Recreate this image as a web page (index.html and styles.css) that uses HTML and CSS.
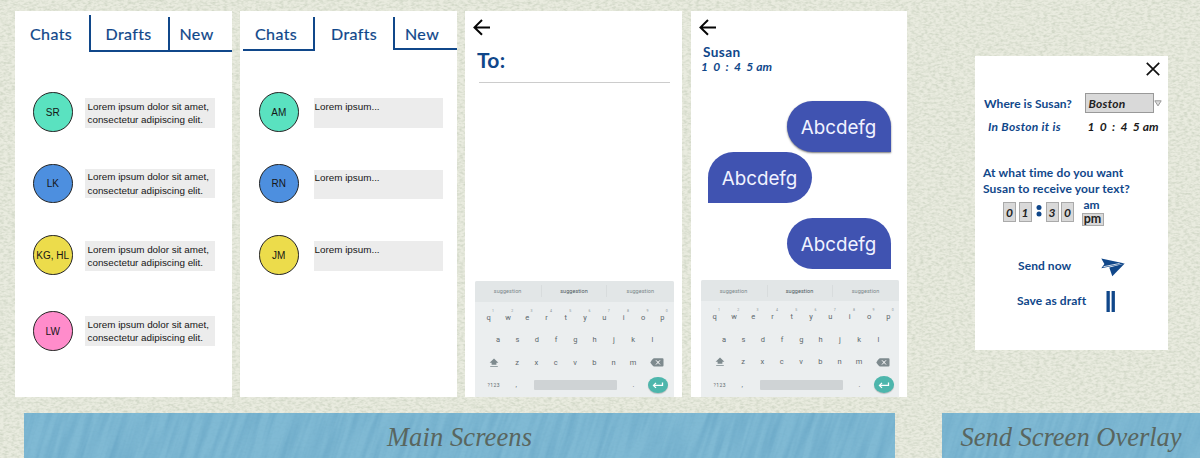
FILE: index.html
```html
<!DOCTYPE html>
<html lang="en">
<head>
<meta charset="utf-8">
<title>Messaging screens</title>
<link rel="stylesheet" href="styles.css">
</head>
<body>
<svg class="paper" width="1200" height="458" aria-hidden="true">
  <defs>
    <filter id="weave" x="0" y="0" width="100%" height="100%" color-interpolation-filters="sRGB">
      <feTurbulence type="fractalNoise" baseFrequency="0.25 0.45" numOctaves="2" seed="8"/>
      <feColorMatrix values="0 0 0 0 .68  0 0 0 0 .73  0 0 0 0 .64  .9 0 0 0 -.34"/>
    </filter>
    <filter id="streak" x="0" y="0" width="100%" height="100%" color-interpolation-filters="sRGB">
      <feTurbulence type="fractalNoise" baseFrequency="0.15 0.012" numOctaves="3" seed="3"/>
      <feColorMatrix values="0 0 0 0 .25  0 0 0 0 .52  0 0 0 0 .68  .5 0 0 0 -.17"/>
    </filter>
    <clipPath id="bands"><path d="M24 413h871v45H24zM942 413h258v45H942z"/></clipPath>
  </defs>
  <rect width="1200" height="458" filter="url(#weave)"/>
  <g clip-path="url(#bands)">
    <rect width="1200" height="458" fill="#70b2d2" opacity=".87"/>
    <g transform="rotate(18 600 435)"><rect x="-50" y="150" width="1300" height="560" filter="url(#streak)"/></g>
  </g>
</svg>

<svg width="0" height="0" class="defs" aria-hidden="true">
  <symbol id="back" viewBox="0 0 18 17"><path d="M17 8.4H1.5M9 1 1.5 8.4 9 15.8" fill="none" stroke="#050505" stroke-width="2"/></symbol>
  <symbol id="shift" viewBox="0 0 10 10"><path d="M5 .4 9.4 4.7H7.4V6.8H2.6V4.7H.6zM1.2 8.2h7.6v.9H1.2z" fill="#7e8a8e"/></symbol>
  <symbol id="erase" viewBox="0 0 14 9"><path d="M4 .3h8.5q1 0 1 1v6.2q0 1-1 1H4Q3 8.500 .3 4.400 3 .3 4 .3z" fill="#7e8a8e"/><path d="m6 2.300 4 4.200m0-4.200L6 6.500" stroke="#fff" stroke-width="1"/></symbol>
  <symbol id="enter" viewBox="0 0 12 8"><path d="M10.500 1.500v2.900H1.500M4 1.900 1.500 4.400 4 6.900" fill="none" stroke="#fff" stroke-width="1.300"/></symbol>
</svg>

<main class="board">
  <section class="screen">
    <nav class="tabs tabs-chats"><span class="t1">Chats</span><span class="t2">Drafts</span><span class="t3">New</span></nav>
    <ul class="list list-chats">
      <li><b class="mint">SR</b><p>Lorem ipsum dolor sit amet,<br>consectetur adipiscing elit.</p></li>
      <li><b class="blue">LK</b><p class="up">Lorem ipsum dolor sit amet,<br>consectetur adipiscing elit.</p></li>
      <li><b class="yellow">KG, HL</b><p>Lorem ipsum dolor sit amet,<br>consectetur adipiscing elit.</p></li>
      <li class="last"><b class="pink">LW</b><p class="up">Lorem ipsum dolor sit amet,<br>consectetur adipiscing elit.</p></li>
    </ul>
  </section>

  <section class="screen">
    <nav class="tabs tabs-drafts"><span class="t1">Chats</span><span class="t2">Drafts</span><span class="t3">New</span></nav>
    <ul class="list list-drafts">
      <li><b class="mint">AM</b><p>Lorem ipsum...</p></li>
      <li><b class="blue">RN</b><p>Lorem ipsum...</p></li>
      <li><b class="yellow">JM</b><p>Lorem ipsum...</p></li>
    </ul>
  </section>

  <section class="screen compose">
    <svg class="back"><use href="#back"/></svg>
    <div class="to"><span>To:</span></div>
    <div class="keyboard">
      <div class="suggest"><span>suggestion</span><span class="mid">suggestion</span><span>suggestion</span></div>
      <div class="keys row1"><i>q<sup>1</sup></i><i>w<sup>2</sup></i><i>e<sup>3</sup></i><i>r<sup>4</sup></i><i>t<sup>5</sup></i><i>y<sup>6</sup></i><i>u<sup>7</sup></i><i>i<sup>8</sup></i><i>o<sup>9</sup></i><i>p<sup>0</sup></i></div>
      <div class="keys row2"><i>a</i><i>s</i><i>d</i><i>f</i><i>g</i><i>h</i><i>j</i><i>k</i><i>l</i></div>
      <div class="keys row3"><svg class="shift"><use href="#shift"/></svg><i>z</i><i>x</i><i>c</i><i>v</i><i>b</i><i>n</i><i>m</i><svg class="erase"><use href="#erase"/></svg></div>
      <div class="row4"><span class="sym">?123</span><span class="comma">,</span><span class="space"></span><span class="dot">.</span><span class="enter"><svg><use href="#enter"/></svg></span></div>
    </div>
  </section>

  <section class="screen thread">
    <svg class="back"><use href="#back"/></svg>
    <h2>Susan</h2>
    <div class="clock"><span class="digits">10:4</span><span>5</span><span class="ampm">am</span></div>
    <div class="bubbles">
      <div class="bubble out raised">Abcdefg</div>
      <div class="bubble in">Abcdefg</div>
      <div class="bubble out low">Abcdefg</div>
    </div>
    <div class="keyboard">
      <div class="suggest"><span>suggestion</span><span class="mid">suggestion</span><span>suggestion</span></div>
      <div class="keys row1"><i>q<sup>1</sup></i><i>w<sup>2</sup></i><i>e<sup>3</sup></i><i>r<sup>4</sup></i><i>t<sup>5</sup></i><i>y<sup>6</sup></i><i>u<sup>7</sup></i><i>i<sup>8</sup></i><i>o<sup>9</sup></i><i>p<sup>0</sup></i></div>
      <div class="keys row2"><i>a</i><i>s</i><i>d</i><i>f</i><i>g</i><i>h</i><i>j</i><i>k</i><i>l</i></div>
      <div class="keys row3"><svg class="shift"><use href="#shift"/></svg><i>z</i><i>x</i><i>c</i><i>v</i><i>b</i><i>n</i><i>m</i><svg class="erase"><use href="#erase"/></svg></div>
      <div class="row4"><span class="sym">?123</span><span class="comma">,</span><span class="space"></span><span class="dot">.</span><span class="enter"><svg><use href="#enter"/></svg></span></div>
    </div>
  </section>

  <section class="overlay">
    <svg class="close" viewBox="0 0 14 14"><path d="m.8.800 12.400 12.400m0-12.400L.8 13.200" stroke="#111" stroke-width="1.700"/></svg>
    <div class="where"><span class="q">Where is Susan?</span><span class="select">Boston</span><svg class="caret" viewBox="0 0 8 7"><path d="M.8.800h6.400L4 5.900z" fill="#ddd" stroke="#999" stroke-width="1"/></svg></div>
    <div class="local"><span class="in-city">In Boston it is</span><span class="clock"><span class="digits">10:4</span><span>5</span><span class="ampm">am</span></span></div>
    <p class="ask">At what time do you want<br>Susan to receive your text?</p>
    <div class="time"><span class="d">0</span><span class="d">1</span><svg class="colon" viewBox="0 0 6 12"><circle cx="3" cy="2.600" r="2.500"/><circle cx="3" cy="9" r="2.500"/></svg><span class="d">3</span><span class="d">0</span>
      <div class="half"><span class="am">am</span><span class="pm">pm</span></div></div>
    <div class="action send"><span>Send now</span><svg viewBox="0 0 24 19"><path d="M.3.500 23.700 5.400.3 10.300 3.400 6.100z"/><path d="M23.700 5.400 11.300 18.200 8.300 9.600z"/><path d="m2.500 8.700 16-3.200" stroke="#fff" stroke-width=".8"/></svg></div>
    <div class="action save"><span>Save as draft</span><svg viewBox="0 0 10 21"><path d="M.5 0h3.300v21H.5zM5.600 0h3.300v21H5.600z"/></svg></div>
  </section>
</main>
<footer class="captions"><div class="main-cap">Main Screens</div><div class="over-cap">Send Screen Overlay</div></footer>
</body>
</html>
```
FILE: styles.css
```css
* { box-sizing: border-box; }
body { margin: 0; width: 1200px; height: 458px; overflow: hidden; background: #e9ebdf; font-family: Lato, "Liberation Sans", sans-serif; font-variant-ligatures: none; color: #10478a; }
p, h2, ul { margin: 0; padding: 0; }
svg { display: block; flex: none; }
.paper { position: absolute; inset: 0; z-index: -1; }
.defs { position: absolute; }
.board { display: flex; align-items: flex-start; gap: 8px; height: 413px; padding: 11px 0 0 15px; }
.screen { width: 217px; height: 385.500px; flex: none; background: #fff; overflow: hidden; }

.tabs { display: flex; align-items: flex-end; height: 41px; font-size: 16px; line-height: 20px; letter-spacing: .4px; white-space: nowrap; -webkit-text-stroke: .2px; }
.tabs-chats .t1 { width: 73.500px; height: 37px; padding: 9px 0 0 15px; }
.tabs-chats .t2 { width: 79px; height: 37px; padding: 9px 0 0 15px; border-left: 2.500px solid; border-bottom: 2px solid; }
.tabs-chats .t3 { width: 64.500px; height: 35px; padding: 7px 0 0 10px; border-left: 2px solid; border-bottom: 2px solid; }
.tabs-drafts { height: 40px; }
.tabs-drafts .t1 { width: 72px; height: 34px; margin-left: 3px; padding: 7px 0 0 12px; border-right: 2px solid; border-bottom: 2px solid; }
.tabs-drafts .t2 { width: 78px; height: 34px; padding: 7px 0 0 16px; }
.tabs-drafts .t3 { width: 64px; height: 33px; margin-bottom: 1px; padding: 7px 0 0 10px; border-left: 2px solid; border-bottom: 2px solid; }

.list { display: flex; flex-direction: column; gap: 31.500px; list-style: none; color: #161616; font-family: "Liberation Sans", Arial, sans-serif; }
.list-chats { padding: 40px 0 0 18px; }
.list-drafts { padding: 41px 0 0 19px; }
.list li { display: flex; align-items: flex-start; height: 40px; }
.list .last { margin-top: 4.500px; }
.list b { display: flex; align-items: center; justify-content: center; width: 39.500px; height: 39.500px; margin-right: 12.500px; padding-top: 1px; border: 1.300px solid #222; border-radius: 50%; font-size: 10px; font-weight: 400; white-space: nowrap; }
.list p { width: 129.500px; height: 29.500px; margin-top: 6px; padding: 1.500px 0 0 2.500px; background: #ececec; font-size: 9.850px; line-height: 13.500px; white-space: nowrap; }
.list .up { margin-top: 5px; }
.list-drafts b { margin-right: 15px; }
.list-drafts p { padding-left: 1px; }
.mint { background: #5ae2c0; }
.blue { background: #4d8fdf; }
.yellow { background: #ecdc4b; }
.pink { background: #ff8ccb; }

.compose, .thread { display: flex; flex-direction: column; }
.thread { width: 216px; margin-left: 1px; }
.back { width: 18px; height: 17px; margin: 8px 0 0 8px; }
.to { height: 36px; width: 191px; margin: 11px 0 0 14px; border-bottom: 1.500px solid #ccc; font-size: 21px; line-height: 26px; font-weight: 700; letter-spacing: .3px; }
.to span { margin-left: -2px; }
.keyboard { width: 199px; height: 120px; margin: auto 0 -4px 9.500px; flex: none; background: #ebeeef; border-radius: 2px 2px 0 0; color: #5c686d; font-family: Roboto, sans-serif; }
.thread .keyboard { width: 198px; height: 120.500px; margin-left: 9.500px; }
.suggest { display: grid; grid-template-columns: repeat(3, 1fr); align-items: center; height: 21px; background: #e2e6e7; border-radius: 2px 2px 0 0; font-size: 5.500px; letter-spacing: .05px; text-align: center; }
.suggest span { line-height: 12px; color: #7b868a; }
.suggest .mid { border: solid #d8dcdd; border-width: 0 1px; color: #4d595e; }
.keys { display: flex; align-items: center; font-size: 7.500px; }
.keys i { position: relative; width: 19.300px; font-style: normal; text-align: center; line-height: 12px; }
.keys sup { position: absolute; left: 13px; top: -5px; font-size: 3.500px; line-height: 8px; color: #8a9498; }
.row1 { height: 32px; padding-left: 4.500px; }
.row2 { height: 13px; padding-left: 14px; }
.row3 { height: 32px; padding-left: 14.500px; }
.shift { width: 10px; height: 10px; margin-right: 8.500px; }
.erase { width: 14px; height: 9px; margin-left: 7.500px; }
.row4 { display: flex; align-items: center; height: 13px; font-size: 5px; }
.sym { width: 32px; padding-left: 13px; letter-spacing: .4px; }
.comma { width: 27.500px; padding-left: 9px; font-size: 7px; }
.space { width: 82.500px; height: 10px; background: #cfd3d5; border-radius: 1px; }
.dot { width: 31px; text-align: center; font-size: 7px; padding-left: 3px; }
.enter { display: grid; place-items: center; width: 20px; height: 16.500px; border-radius: 50%; background: #4db6ac; box-shadow: 0 1px 1px #0003; }
.enter svg { width: 12px; height: 8px; }

.thread h2 { margin: 7px 0 0 12px; font-size: 13.600px; line-height: 18px; letter-spacing: .4px; }
.clock { display: flex; font-style: italic; font-weight: 700; font-size: 12px; line-height: 13px; white-space: nowrap; }
.thread .clock { margin: -1px 0 1px 10px; }
.digits { letter-spacing: 5.300px; }
.ampm { margin-left: 3px; }
.bubbles { display: flex; flex-direction: column; padding: 27px 16.500px 0; }
.bubble { display: flex; align-items: center; justify-content: center; width: 104px; height: 51px; background: #4053b1; color: #f0f2ff; font-family: Inter, sans-serif; font-weight: 400; font-size: 18.800px; padding-top: 2px; }
.out { align-self: flex-end; border-radius: 26px 26px 0 26px; }
.in { border-radius: 26px 26px 26px 0; }
.raised { box-shadow: 0 1px 2px #0008; }
.low { margin-top: 14.500px; }

.overlay { width: 193px; height: 294px; margin: 45px 0 0 60px; background: #fff; font-weight: 700; font-size: 12px; white-space: nowrap; }
.close { width: 14px; height: 14px; margin: 6px 0 0 171px; }
.where { display: flex; align-items: center; margin-top: 17px; padding-left: 9px; height: 20px; }
.q { width: 100.500px; letter-spacing: .05px; }
.select { width: 69px; height: 19.500px; padding-left: 3px; border: 1px solid #999; background: #d9d9d9; color: #222; font-style: italic; font-size: 12px; letter-spacing: .25px; line-height: 19px; }
.caret { width: 8px; height: 7px; }
.local { display: flex; align-items: center; padding: 3px 0 0 13px; height: 23px; }
.in-city { width: 99.500px; font-style: italic; font-size: 12px; letter-spacing: .3px; }
.local .clock { color: #1a1a1a; }
.ask { margin-top: 29px; padding-left: 8px; line-height: 15.500px; letter-spacing: .13px; }
.time { display: flex; align-items: flex-start; height: 30px; padding: 6px 0 0 28px; }
.d { width: 13px; height: 19.500px; margin-right: 2.500px; border: 1px solid #aaa; background: #d9d9d9; color: #222; font-style: italic; font-size: 12px; line-height: 20px; text-align: center; }
.colon { width: 6px; height: 12px; margin: 3px 4px 0 1.500px; fill: #10478a; }
.half { display: flex; flex-direction: column; margin: -5px 0 0 5px; }
.am { padding-left: 2px; line-height: 16px; font-size: 12px; }
.pm { width: 22px; height: 13px; border: 1px solid #aaa; background: #d9d9d9; color: #222; line-height: 9px; text-align: center; font-size: 12.500px; }
.action { display: flex; align-items: center; fill: #10478a; letter-spacing: .08px; }
.send { margin-top: 29px; height: 20px; padding-left: 43px; }
.send span { width: 83px; }
.send svg { width: 24px; height: 19px; margin-top: 5px; }
.save { margin-top: 14px; height: 22px; padding-left: 42px; }
.save span { width: 89px; }
.save svg { width: 10px; height: 21px; margin-top: 2px; }

.captions { display: flex; height: 45px; padding-left: 24px; color: #59665f; font-family: "Liberation Serif", serif; font-style: italic; font-size: 26.500px; line-height: 48px; text-align: center; white-space: nowrap; }
.main-cap { width: 871px; margin-right: 47px; letter-spacing: .1px; }
.over-cap { width: 258px; letter-spacing: 0; }
```
